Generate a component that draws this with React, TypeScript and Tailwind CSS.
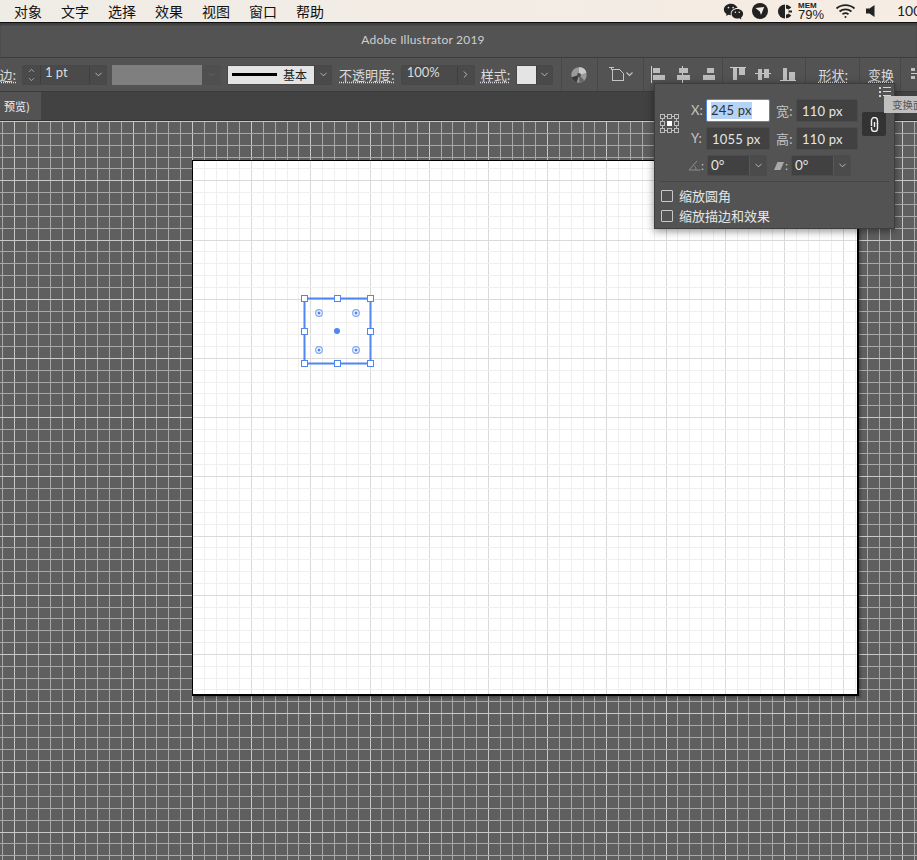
import React from 'react'
import { ChevronDown, ChevronRight, ChevronUp } from 'lucide-react'
import { RiWechatFill } from 'react-icons/ri'

const cjk = "font-['Noto_Sans_CJK_SC','Noto_Sans',sans-serif]"
const latin = "font-['Lato','Noto_Sans_CJK_SC',sans-serif]"
const toolLabel = 'text-[13px] underline decoration-dotted underline-offset-2 whitespace-nowrap'

const menuItems = ['对象', '文字', '选择', '效果', '视图', '窗口', '帮助']

const step = 11.84
const range = (from: number, to: number) => Array.from({ length: to - from + 1 }, (_, i) => from + i)
const gridX = range(-7, 71).map((n) => ({ n, at: Math.round(73.5 + step * n) }))
const gridY = range(-5, 58).map((n) => ({ n, at: Math.round(180.3 + step * n) }))

function CanvasGrid({ minor, major, w, h, dx, dy }: { minor: string; major: string; w: number; h: number; dx: number; dy: number }) {
  return (
    <svg width={w} height={h} className="block" shapeRendering="crispEdges">
      {gridX.map(({ n, at }) => (
        <line key={'x' + n} x1={at - dx + 0.5} x2={at - dx + 0.5} y1={0} y2={h} stroke={n % 5 === 0 ? major : minor} />
      ))}
      {gridY.map(({ n, at }) => (
        <line key={'y' + n} y1={at - dy + 0.5} y2={at - dy + 0.5} x1={0} x2={w} stroke={n % 5 === 0 ? major : minor} />
      ))}
    </svg>
  )
}

function Field({ value }: { value: string }) {
  return (
    <div className={`h-[23px] rounded-[2px] border border-[#4c4c4c] bg-[#414141] pl-[5px] text-[13px] leading-[22px] tracking-[0.2px] text-[#e6e6e6] ${latin}`}>
      {value}
    </div>
  )
}

function Caret({ className = '' }: { className?: string }) {
  return (
    <div className={`flex items-center justify-center border-l border-[#3f3f3f] ${className}`}>
      <ChevronDown size={11} strokeWidth={1.6} className="text-[#dcdcdc]" />
    </div>
  )
}

// bars are x, y, w, h in the icon's own box
function AlignIcon({ w, bars, rule, className = '' }: { w: number; bars: number[][]; rule: number[]; className?: string }) {
  return (
    <svg width={w} height="19" viewBox={`0 0 ${w} 19`} className={`block ${className}`} shapeRendering="crispEdges">
      <rect x={rule[0]} y={rule[1]} width={rule[2]} height={rule[3]} fill="#cdcdcd" />
      {bars.map((b, i) => (
        <rect key={i} x={b[0]} y={b[1]} width={b[2]} height={b[3]} fill="#bdbdbd" />
      ))}
    </svg>
  )
}

function Divider({ className = '' }: { className?: string }) {
  return <div className={`h-[33px] w-px shrink-0 bg-[#484848] ${className}`} />
}

function MenuBar() {
  return (
    <div className="flex h-[22px] items-center bg-gradient-to-r from-[#efece6] to-[#f6ece3]">
      <div className={`ml-[14px] flex gap-[19px] text-[14px] leading-[20px] text-[#111] ${cjk}`}>
        {menuItems.map((m) => (
          <span key={m}>{m}</span>
        ))}
      </div>
      <div className="ml-auto flex items-center text-[#222]">
        <RiWechatFill size={21} className="mr-[8px]" />
        <svg width="16" height="16" viewBox="0 0 16 16" className="mr-[9px]">
          <circle cx="8" cy="8" r="8" fill="#222" />
          <path d="M3.5 5 L12.2 4 L9 12 L7.8 8.4 Z" fill="#f6ece3" />
        </svg>
        <svg width="15" height="15" viewBox="0 0 15 15" className="mr-[6px]">
          <path d="M8 0.5 A7 7 0 0 0 8 14.5 Z" fill="#222" />
          <path d="M9 0.7 C11 0.9 13 2 14.3 3.6 L11.5 5.6 C11 5 10 4.5 9 4.4 Z M9 10.6 C10 10.5 11 10 11.5 9.4 L14.3 11.4 C13 13 11 14.1 9 14.3 Z M11.5 6.4 H15 V8.6 H11.5 Z" fill="#222" />
        </svg>
        <div className="mr-[12px] flex w-[25px] flex-col font-['Liberation_Sans',sans-serif] text-[#222]">
          <span className="text-[8px] leading-[7px] font-bold">MEM</span>
          <span className="text-[13px] leading-[11px]">79%</span>
        </div>
        <svg width="21" height="16" viewBox="0 0 21 16" className="mr-[10px]" fill="none" stroke="#222" strokeWidth="1.7">
          <path d="M1.5 5.5 C6.5 1 14.5 1 19.5 5.5" />
          <path d="M4.5 8.5 C8 5.6 13 5.6 16.5 8.5" />
          <path d="M7.5 11.3 C9.3 10 11.7 10 13.5 11.3" />
          <circle cx="10.5" cy="14" r="1" fill="#222" stroke="none" />
        </svg>
        <svg width="9" height="12" viewBox="0 0 9 12" className="mr-[22px]" fill="#222">
          <path d="M0 3.5 H3.5 L8.5 0 V12 L3.5 8.5 H0 Z" />
        </svg>
        <span className={`w-[20px] overflow-hidden text-[14px] leading-[20px] whitespace-nowrap ${latin}`}>100%</span>
      </div>
    </div>
  )
}

function ControlBar() {
  return (
    <div className={`flex h-[34px] items-center overflow-hidden border-b border-[#3a3a3a] bg-[#535353] text-[#dcdcdc] ${cjk}`}>
      <div className="flex w-[16px] shrink-0 justify-end overflow-hidden">
        <span className={`${toolLabel} shrink-0`}>描边:</span>
      </div>
      <div className="ml-[6px] flex h-[20px] w-[85px] shrink-0 rounded-[2px] border border-[#484848] bg-[#4a4a4a]">
        <div className="flex w-[18px] flex-col items-center justify-center border-r border-[#3f3f3f]">
          <ChevronUp size={9} strokeWidth={1.6} />
          <ChevronDown size={9} strokeWidth={1.6} />
        </div>
        <div className={`w-[48px] pl-[4px] text-[13px] leading-[13px] ${latin}`}>1 pt</div>
        <Caret className="flex-1" />
      </div>
      <div className="ml-[5px] h-[20px] w-[90px] shrink-0 bg-[#7f7f7f]" />
      <div className="flex h-[20px] w-[19px] shrink-0 items-center justify-center bg-[#4f4f4f]">
        <ChevronDown size={11} strokeWidth={1.4} className="text-[#6a6a6a]" />
      </div>
      <div className="ml-[6px] flex h-[20px] w-[105px] shrink-0 rounded-[2px] border border-[#484848] bg-[#4a4a4a]">
        <div className="flex w-[86px] items-center bg-[#e4e4e4] pl-[4px] text-[#222]">
          <div className="h-[3px] w-[45px] bg-black" />
          <span className="mt-[1px] ml-[6px] text-[12px] leading-[18px] whitespace-nowrap">基本</span>
        </div>
        <Caret className="flex-1" />
      </div>
      <span className={`ml-[7px] ${toolLabel}`}>不透明度:</span>
      <div className="ml-[6px] flex h-[20px] w-[74px] shrink-0 rounded-[2px] border border-[#484848] bg-[#4a4a4a]">
        <div className={`w-[55px] pl-[5px] text-[13px] leading-[13px] ${latin}`}>100%</div>
        <div className="flex flex-1 items-center justify-center border-l border-[#3f3f3f]">
          <ChevronRight size={11} strokeWidth={1.6} />
        </div>
      </div>
      <span className={`ml-[6px] ${toolLabel}`}>样式:</span>
      <div className="ml-[6px] flex h-[20px] w-[37px] shrink-0 rounded-[2px] border border-[#484848] bg-[#4a4a4a]">
        <div className="w-[19px] bg-[#e4e4e4]" />
        <Caret className="flex-1" />
      </div>
      <Divider className="ml-[8px]" />
      <svg width="16" height="16" viewBox="0 0 17 17" className="ml-[9px] shrink-0">
        <circle cx="8.5" cy="8.5" r="8.2" fill="#9a9a9a" />
        <path d="M8.5 8.5 L8.5 0.3 A8.2 8.2 0 0 1 16.4 6 Z" fill="#cacaca" />
        <path d="M8.5 8.5 L0.6 11 A8.2 8.2 0 0 0 6 16.4 Z" fill="#3a3a3a" />
        <path d="M8.5 8.5 L14 14 A8.2 8.2 0 0 1 9 16.6 Z" fill="#666" />
        <circle cx="8.5" cy="8.5" r="2" fill="#4a4a4a" />
      </svg>
      <Divider className="ml-[10px]" />
      <svg width="25" height="15" viewBox="0 0 25 15" className="ml-[11px] shrink-0" fill="none" stroke="#c4c4c4" shapeRendering="crispEdges">
        <path d="M3.5 2.5 H10.5 L14.5 6.5 V13.5 H3.5 Z" />
        <path d="M0 0.5 H5 M2.5 0 V3" />
        <path d="M17.5 5.5 L20.5 8.5 L23.5 5.5" shapeRendering="auto" strokeWidth="1.2" />
      </svg>
      <Divider className="ml-[9px]" />
      <AlignIcon w={16} className="ml-[7px]" rule={[0, 0, 1, 19]} bars={[[2, 2, 8, 6], [2, 10, 13, 6]]} />
      <AlignIcon w={14} className="ml-[11px]" rule={[6, 0, 1, 19]} bars={[[2, 2, 10, 6], [0, 10, 14, 6]]} />
      <AlignIcon w={15} className="ml-[13px]" rule={[14, 0, 1, 19]} bars={[[4, 2, 8, 6], [0, 10, 13, 6]]} />
      <Divider className="ml-[6px]" />
      <AlignIcon w={18} className="ml-[7px]" rule={[0, 1, 18, 1]} bars={[[3, 2, 5, 14], [10, 2, 6, 8]]} />
      <AlignIcon w={18} className="ml-[8px]" rule={[0, 8, 18, 1]} bars={[[3, 3, 5, 12], [10, 4, 5, 9]]} />
      <AlignIcon w={18} className="ml-[9px]" rule={[0, 16, 18, 1]} bars={[[3, 2, 5, 14], [10, 7, 6, 9]]} />
      <Divider className="ml-[9px]" />
      <span className={`ml-[12px] ${toolLabel}`}>形状:</span>
      <Divider className="ml-[11px]" />
      <span className={`ml-[8px] ${toolLabel}`}>变换</span>
      <Divider className="ml-[6px]" />
      <AlignIcon w={6} className="ml-[10px] shrink-0" rule={[0, 8, 6, 1]} bars={[[0, 3, 4, 3], [0, 11, 4, 3]]} />
    </div>
  )
}

function AnchorGrid() {
  const cells = [0, 7, 14]
  return (
    <svg width="19" height="19" viewBox="0 0 19 19" className="mt-[30px] ml-[5px]" fill="none" stroke="#bdbdbd" shapeRendering="crispEdges">
      {cells.flatMap((y) =>
        cells.map((x) =>
          x === 7 && y === 7 ? (
            <rect key="mid" x="7" y="7" width="5" height="5" fill="#fff" stroke="none" />
          ) : (
            <rect key={`${x}-${y}`} x={x + 0.5} y={y + 0.5} width="4" height="4" />
          ),
        ),
      )}
      <path d="M5 2.5H7M12 2.5H14M5 16.5H7M12 16.5H14M2.5 5V7M2.5 12V14M16.5 5V7M16.5 12V14" />
    </svg>
  )
}

function AngleField() {
  return (
    <div className="flex h-[21px] w-[60px] rounded-[2px] border border-[#4c4c4c] bg-[#414141]">
      <span className="w-[41px] pl-[3px] text-[13.5px] leading-[19px] text-[#e6e6e6]">0°</span>
      <Caret className="flex-1 border-[#585858] bg-[#4b4b4b]" />
    </div>
  )
}

function TransformPanel() {
  return (
    <div className={`absolute top-[83px] left-[654px] h-[146px] w-[241px] border border-[#3d3d3d] bg-[#535353] shadow-[0_2px_8px_rgba(0,0,0,0.45)] ${cjk}`}>
      <svg width="12" height="10" viewBox="0 0 12 10" className="absolute top-[3px] left-[224px]" fill="#d4d4d4" shapeRendering="crispEdges">
        <rect x="0" y="0" width="2" height="2" /><rect x="4" y="0" width="8" height="1" />
        <rect x="0" y="4" width="2" height="2" /><rect x="4" y="4" width="8" height="1" />
        <rect x="0" y="8" width="2" height="2" /><rect x="4" y="8" width="8" height="1" />
      </svg>
      <div className="flex">
        <AnchorGrid />
        <div className={`mt-[15px] ml-[12px] grid grid-cols-[15px_64px_26px_62px] items-center gap-y-[5px] text-[13px] text-[#c4c4c4] ${latin}`}>
          <span>X:</span>
          <div className="flex h-[23px] items-center rounded-[2px] border border-[#4d88e0] bg-white pl-[4px] text-[13px] tracking-[0.2px] text-[#333]">
            <span className="bg-[#b4d3f5] leading-[17px]">245 px</span>
          </div>
          <span className={`pl-[6px] ${cjk}`}>宽:</span>
          <Field value="110 px" />
          <span>Y:</span>
          <Field value="1055 px" />
          <span className={`pl-[6px] ${cjk}`}>高:</span>
          <Field value="110 px" />
        </div>
        <div className="mt-[28px] ml-[4px] flex h-[24px] w-[24px] items-center justify-center rounded-[2px] bg-[#333]">
          <svg width="9" height="15" viewBox="0 0 9 15" fill="none" stroke="#f0f0f0" strokeWidth="1.4">
            <path d="M1.5 9 V3.5 A3 3 0 0 1 7.5 3.5 V7" />
            <path d="M4.5 5 V10" />
            <path d="M7.5 6 V11.5 A3 3 0 0 1 1.5 11.5 V10" />
          </svg>
        </div>
      </div>
      <div className={`mt-[5px] ml-[33px] flex items-center text-[13px] text-[#c4c4c4] ${latin}`}>
        <svg width="13" height="11" viewBox="0 0 13 11" fill="none" stroke="#8d8d8d">
          <path d="M12.5 10 H1 L9 1 M8 10 C8 8 7.2 6.4 5.8 5.5" />
        </svg>
        <span className="w-[6px] text-[12px]">:</span>
        <AngleField />
        <svg width="10" height="8" viewBox="0 0 10 8" className="ml-[7px]" fill="#a9a9a9">
          <path d="M3.5 0 H10 L6.5 8 H0 Z" />
        </svg>
        <span className="w-[7px] pl-[1px] text-[12px]">:</span>
        <AngleField />
      </div>
      <div className="mx-[5px] mt-[5px] h-px bg-[#464646]" />
      <label className="mt-[4px] ml-[6px] flex h-[20px] items-center gap-[6px] text-[13px] text-[#e6e6e6]">
        <span className="h-[12px] w-[12px] rounded-[1px] border border-[#c8c8c8]" />
        缩放圆角
      </label>
      <label className="ml-[6px] flex h-[20px] items-center gap-[6px] text-[13px] text-[#e6e6e6]">
        <span className="h-[12px] w-[12px] rounded-[1px] border border-[#c8c8c8]" />
        缩放描边和效果
      </label>
    </div>
  )
}

function Selection() {
  const handles = [
    [0, 0], [33, 0], [66, 0],
    [0, 33], [66, 33],
    [0, 65], [33, 65], [66, 65],
  ]
  const dots = [[18, 18], [55, 18], [18, 55], [55, 55]]
  return (
    <svg width="76" height="76" viewBox="0 0 76 76" className="absolute top-[174px] left-[301px] overflow-visible">
      <rect x="3.5" y="3.5" width="66" height="65" fill="none" stroke="#4f86ef" strokeWidth="2" />
      {dots.map(([x, y]) => (
        <g key={`${x}-${y}`}>
          <circle cx={x} cy={y} r="3.3" fill="none" stroke="#7ea6f2" strokeWidth="1.2" />
          <circle cx={x} cy={y} r="1.5" fill="#4f86ef" />
        </g>
      ))}
      <circle cx="36" cy="36" r="3" fill="#4f86ef" />
      {handles.map(([x, y]) => (
        <rect key={`${x}-${y}`} x={x + 0.5} y={y + 0.5} width="6" height="6" fill="#fff" stroke="#4f86ef" shapeRendering="crispEdges" />
      ))}
    </svg>
  )
}

export default function App() {
  return (
    <div className="relative flex h-[860px] w-[917px] flex-col overflow-hidden bg-[#5f5f5f]">
      <MenuBar />
      <div className="h-[1px] bg-[#111]" />
      <div className={`flex h-[35px] items-center justify-center border-b border-[#3c3c3c] bg-[#535353] pr-[71px] text-[12px] tracking-[0.2px] text-[#cfcfcf] shadow-[inset_0_2px_2px_rgba(0,0,0,0.25)] ${latin}`}>
        Adobe Illustrator 2019
      </div>
      <ControlBar />
      <div className="flex h-[29px] border-b border-[#333] bg-[#424242]">
        <div className={`flex w-[41px] items-center bg-[#535353] pl-[4px] text-[11px] font-medium text-[#dedede] ${cjk}`}>预览)</div>
      </div>
      <div className="relative flex-1">
        <div className="absolute inset-0">
          <CanvasGrid minor="#a8a8a8" major="#c8c8c8" w={917} h={739} dx={0} dy={121} />
        </div>
        {/* artboard sits on the free canvas */}
        <div className="absolute top-[39px] left-[192px] h-[536px] w-[667px] overflow-hidden border-t border-r-2 border-b-2 border-l border-black bg-white shadow-[2px_2px_2px_rgba(0,0,0,0.25)]">
          <CanvasGrid minor="#efefef" major="#dadada" w={664} h={533} dx={193} dy={161} />
        </div>
        <Selection />
      </div>
      <TransformPanel />
      <div className={`absolute top-[96px] left-[884px] flex h-[17px] w-[60px] items-center whitespace-nowrap bg-[#c0c0c0] pl-[8px] text-[10.5px] text-[#555] ${cjk}`}>
        变换面板
      </div>
    </div>
  )
}
